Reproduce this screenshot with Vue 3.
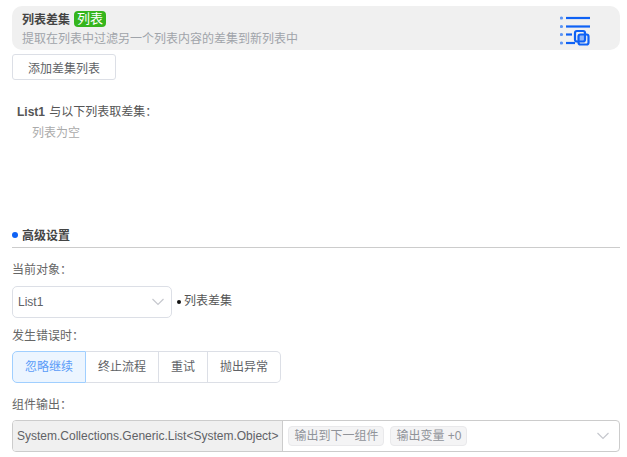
<script setup>
const modes = ['忽略继续', '终止流程', '重试', '抛出异常']
</script>

<template>
  <div class="page">
    <div class="head">
      <div class="head-text">
        <div class="title-row">
          <span class="title">列表差集</span>
          <span class="badge">列表</span>
        </div>
        <div class="desc">提取在列表中过滤另一个列表内容的差集到新列表中</div>
      </div>
      <svg class="logo" width="32" height="32" viewBox="0 0 32 32" fill="none">
        <g fill="#5b94f5">
          <circle cx="1.5" cy="2" r="1.6" />
          <circle cx="1.5" cy="10.5" r="1.6" />
          <circle cx="1.5" cy="18.5" r="1.6" />
          <circle cx="1.5" cy="27" r="1.6" />
        </g>
        <rect x="18.5" y="18.5" width="6.5" height="7" fill="#8fb4f8" />
        <g stroke="#0f62f5" stroke-width="2.2">
          <path d="M6 2H30" />
          <path d="M6 10.5H30" />
          <path d="M6 18.5H12" />
          <path d="M6 27H15" />
          <rect x="15" y="15" width="10" height="10.5" rx="2" />
          <rect x="18.5" y="18.5" width="10" height="10" rx="2" />
        </g>
      </svg>
    </div>
    <button class="add">添加差集列表</button>
    <div class="list-title"><b>List1</b> 与以下列表取差集：</div>
    <div class="empty">列表为空</div>

    <div class="section">
      <i class="dot"></i>
      <span>高级设置</span>
    </div>

    <div class="label first">当前对象：</div>
    <div class="object-row">
      <div class="select">
        <span>List1</span>
        <svg width="14" height="8" viewBox="0 0 14 8" fill="none"><path d="M1.5 1 7 6.5 12.5 1" stroke="#c6c8ce" stroke-width="1.2" /></svg>
      </div>
      <span class="bullet"></span>
      <span class="object-name">列表差集</span>
    </div>

    <div class="label err">发生错误时：</div>
    <div class="modes">
      <span v-for="(m, i) in modes" :key="m" class="mode" :class="{ active: i === 0 }">{{ m }}</span>
    </div>

    <div class="label out">组件输出：</div>
    <div class="output">
      <div class="type">System.Collections.Generic.List&lt;System.Object&gt;</div>
      <div class="tags">
        <span class="tag">输出到下一组件</span>
        <span class="tag">输出变量 +0</span>
      </div>
      <svg class="out-arrow" width="14" height="8" viewBox="0 0 14 8" fill="none"><path d="M1.5 1 7 6.5 12.5 1" stroke="#c6c8ce" stroke-width="1.2" /></svg>
    </div>
  </div>
</template>

<style scoped>
.page {
  box-sizing: border-box;
  width: 627px;
  height: 457px;
  overflow: hidden;
  padding: 6px 7px 0 12px;
  font-family: "Liberation Sans", "Noto Sans CJK SC", sans-serif;
  font-size: 12px;
  color: #606266;
}
.head {
  display: flex;
  justify-content: space-between;
  align-items: flex-start;
  height: 44px;
  background: #f0f0f0;
  border-radius: 10px;
  box-sizing: border-box;
  padding: 5px 10px 0 10px;
}
.title-row {
  display: flex;
  align-items: center;
  gap: 4px;
  height: 15px;
}
.title {
  font-weight: 700;
  color: #444;
}
.badge {
  background: #35b51d;
  color: #fff;
  border-radius: 4px;
  padding: 0 3px;
  height: 16px;
  line-height: 16px;
  font-size: 13px;
}
.desc {
  margin-top: 5px;
  color: #a0a4aa;
  line-height: 16px;
}
.logo {
  margin-top: 5px;
  margin-right: 18px;
}
.add {
  display: block;
  box-sizing: border-box;
  width: 104px;
  height: 26px;
  margin-top: 4px;
  padding: 0;
  font: inherit;
  color: #606266;
  background: #fff;
  border: 1px solid #dcdfe6;
  border-radius: 3px;
}
.list-title {
  margin: 24px 0 0 5px;
  line-height: 16px;
  color: #555;
}
.list-title b {
  margin-right: 1px;
}
.empty {
  margin: 5px 0 0 20px;
  line-height: 16px;
  color: #aaa;
}
.section {
  display: flex;
  align-items: center;
  gap: 4px;
  height: 23px;
  margin-top: 84px;
  box-sizing: border-box;
  border-bottom: 1px solid #ccc;
  padding-bottom: 3px;
  font-weight: 700;
  color: #444;
}
.dot {
  width: 6px;
  height: 6px;
  border-radius: 50%;
  background: #0f62f5;
}
.label {
  line-height: 16px;
  color: #666;
}
.first { margin-top: 14px; }
.err { margin-top: 10px; }
.out { margin-top: 14px; }
.object-row {
  display: flex;
  align-items: center;
  margin-top: 8px;
}
.select {
  box-sizing: border-box;
  width: 160px;
  height: 32px;
  display: flex;
  align-items: center;
  justify-content: space-between;
  padding: 0 6px 0 5px;
  border: 1px solid #dcdfe6;
  border-radius: 5px;
}
.bullet {
  width: 4px;
  height: 4px;
  border-radius: 50%;
  background: #111;
  margin: 0 3px 0 5px;
}
.object-name { color: #555; margin-top: -6px; }
.modes {
  display: flex;
  width: max-content;
  margin-top: 7px;
}
.mode {
  box-sizing: border-box;
  height: 32px;
  line-height: 30px;
  padding: 0 12px;
  border: 1px solid #dcdfe6;
  border-left-width: 0;
  color: #606266;
}
.mode:last-child { border-radius: 0 5px 5px 0; }
.mode.active {
  border: 1px solid #a0cfff;
  border-radius: 5px 0 0 5px;
  background: #ecf5ff;
  color: #5a9cf8;
}
.output {
  display: flex;
  align-items: center;
  box-sizing: border-box;
  height: 32px;
  margin-top: 7px;
  border: 1px solid #ccc;
  border-radius: 4px;
}
.type {
  box-sizing: border-box;
  height: 30px;
  line-height: 30px;
  padding: 0 4px;
  background: #f0f0f0;
  border-right: 1px solid #ccc;
  border-radius: 3px 0 0 3px;
  white-space: nowrap;
}
.tags {
  flex: 1;
  display: flex;
  gap: 6px;
  padding-left: 5px;
}
.tag {
  height: 20px;
  line-height: 18px;
  padding: 0 5px;
  background: #f4f4f5;
  border: 1px solid #e9e9eb;
  box-sizing: border-box;
  border-radius: 4px;
  color: #909399;
}
.out-arrow { margin-right: 9px; }
</style>
